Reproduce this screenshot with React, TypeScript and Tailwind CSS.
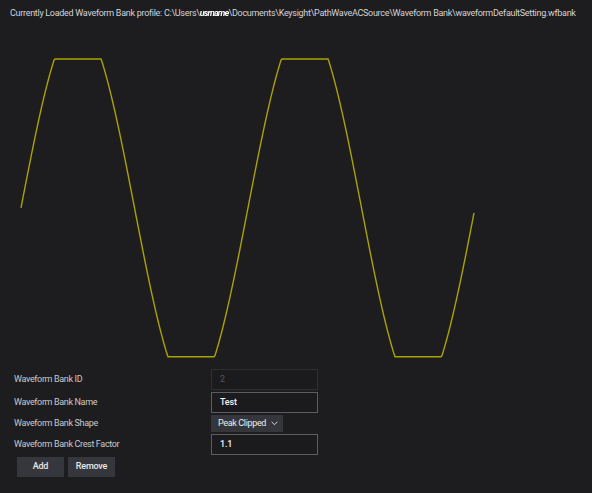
import React from 'react';

// Clipped sine preview, drawn in page coordinates (svg starts at y=28)
const TOP = 28;
const buildWave = (): string => {
  const pts: string[] = [];
  const period = 227;
  const amp = 186.5;
  const mid = 207.8;
  for (let x = 21; x <= 474; x += 1) {
    const phase = ((x - 21) / period) * Math.PI * 2;
    let y = mid - amp * Math.sin(phase);
    y = Math.max(59, Math.min(356.7, y));
    pts.push(`${x},${(y - TOP).toFixed(2)}`);
  }
  return pts.join(' ');
};

const Row: React.FC<{ label: string; children: React.ReactNode }> = ({ label, children }) => (
  <div className="flex items-center">
    <div className="w-[197px] text-[9px] tracking-[-0.35px] text-[#c9c9cc]">{label}</div>
    {children}
  </div>
);

const App: React.FC = () => {
  const points = buildWave();

  return (
    <div
      className="w-[592px] h-[493px] bg-[#1d1d20] overflow-hidden"
      style={{ fontFamily: 'Roboto, "Liberation Sans", sans-serif' }}
    >
      <div className="h-[28px] pl-[10px] flex items-center text-[9px] tracking-[-0.29px] text-[#d4d4d6] whitespace-nowrap">
        Currently Loaded Waveform Bank profile: C:\Users\
        <span className="font-bold text-white blur-[0.4px] italic tracking-[-0.8px]">usrname</span>
        \Documents\Keysight\PathWaveACSource\Waveform Bank\waveformDefaultSetting.wfbank
      </div>

      <svg width={592} height={337} className="block">
        <polyline points={points} fill="none" stroke="#aaa300" strokeWidth={1.4} strokeLinejoin="miter" />
      </svg>

      <div className="pl-[14px] pt-[4px] flex flex-col gap-[2px]">
        <Row label="Waveform Bank ID">
          <div className="w-[107px] h-[21px] border border-[#2e2e33] bg-[#1b1b1e] px-[8px] flex items-center text-[9px] text-[#55565b]">
            2
          </div>
        </Row>
        <Row label="Waveform Bank Name">
          <div className="w-[107px] h-[21px] border border-[#5c5c62] bg-[#1b1b1e] px-[8px] flex items-center text-[9px] tracking-[-0.2px] font-medium text-[#f2f2f2]">
            Test
          </div>
        </Row>
        <Row label="Waveform Bank Shape">
          <div className="w-[72px] h-[17px] bg-[#35363b] pl-[7px] flex items-center gap-[5px] whitespace-nowrap text-[9px] tracking-[-0.35px] text-[#ededed]">
            <span>Peak Clipped</span>
            <svg width="7" height="5" viewBox="0 0 7 5" className="shrink-0">
              <path d="M0.6 0.8 L3.5 3.7 L6.4 0.8" fill="none" stroke="#d8d8d8" strokeWidth="1" />
            </svg>
          </div>
        </Row>
        <Row label="Waveform Bank Crest Factor">
          <div className="w-[107px] h-[21px] border border-[#5c5c62] bg-[#1b1b1e] px-[8px] flex items-center text-[9px] tracking-[-0.2px] font-medium text-[#f2f2f2]">
            1.1
          </div>
        </Row>
        <div className="flex gap-[4px] pl-[3px]">
          <button className="w-[47px] h-[20px] bg-[#36373c] text-[9px] tracking-[-0.2px] font-medium text-[#e8e8e8]">Add</button>
          <button className="w-[47px] h-[20px] bg-[#36373c] text-[9px] tracking-[-0.2px] font-medium text-[#e8e8e8]">Remove</button>
        </div>
      </div>
    </div>
  );
};

export default App;
